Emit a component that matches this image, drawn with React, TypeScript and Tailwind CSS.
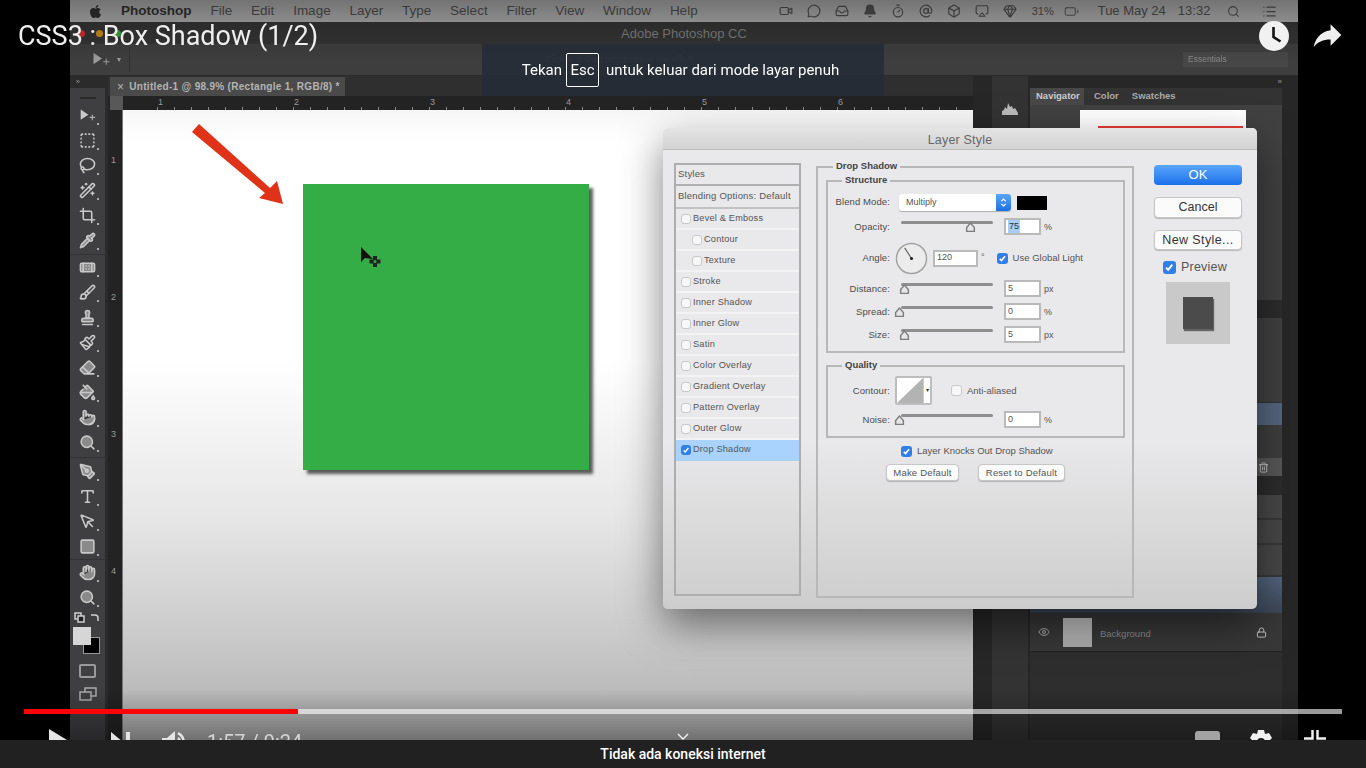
import {
  Airplay, AtSign, Battery, Bell, Brush, Crop, Eraser, Gem, Hand, Inbox, Lasso, List, Lock, MessageCircle,
  MousePointer, PaintBucket, Pipette, Search, Square, SquareDashed, Stamp, Timer, Type, Video, Wand2,
  Bandage, PenTool, Pointer, Paintbrush, Eye, Trash2, Box,
} from "lucide-react";
import { FaApple } from "react-icons/fa";
import type { ReactNode } from "react";

const menus = ["File", "Edit", "Image", "Layer", "Type", "Select", "Filter", "View", "Window", "Help"];
const statusIcons = [Video, MessageCircle, Inbox, Bell, Timer, AtSign, Box, Airplay, Gem];
const toolGroups = [
  { gap: "", tools: [MoveTool, SquareDashed, Lasso, Wand2, Crop, Pipette] },
  { gap: "border-t border-[#333] mt-px", tools: [Bandage, Brush, Stamp, Paintbrush, Eraser, PaintBucket, Pointer, Search] },
  { gap: "border-t border-[#333] mt-[2px] pt-px", tools: [PenTool, Type, MousePointer, Square] },
  { gap: "border-t border-[#333]", tools: [Hand, Search] },
];
// these read as solid shapes in the video
const solidTools = [Bandage, Stamp, Eraser, PaintBucket, Pointer, Search, PenTool, Square, Hand, Pipette];
const effects = [
  { label: "Bevel & Emboss" },
  { label: "Contour", sub: true },
  { label: "Texture", sub: true },
  { label: "Stroke" },
  { label: "Inner Shadow" },
  { label: "Inner Glow" },
  { label: "Satin" },
  { label: "Color Overlay" },
  { label: "Gradient Overlay" },
  { label: "Pattern Overlay" },
  { label: "Outer Glow" },
  { label: "Drop Shadow", checked: true },
];

function MoveTool({ className }: { className?: string }) {
  return (
    <svg viewBox="0 0 20 16" className={className} fill="currentColor">
      <path d="M2 1l9 6-9 6z" />
      <path d="M15 7h1.400v2.500H19V11h-2.600v2.500H15V11h-2.500V9.500H15z" opacity="0.8" />
    </svg>
  );
}

function Check({ on, size = "w-[11px] h-[11px]" }: { on?: boolean; size?: string }) {
  return (
    <span
      className={`${size} shrink-0 rounded-[3px] flex items-center justify-center ${
        on ? "bg-[#2f7fe6]" : "bg-[#f7f7f7] border border-[#c9c9c9]"
      }`}
    >
      {on && (
        <svg viewBox="0 0 10 10" className="w-[80%] h-[80%]" fill="none" stroke="white" strokeWidth="1.800">
          <path d="M2 5.500l2 2 4-5" />
        </svg>
      )}
    </span>
  );
}

function Field({ value, selected, width = "w-[37px]" }: { value: string; selected?: boolean; width?: string }) {
  return (
    <span className={`${width} h-[17px] bg-white border-2 border-[#bababa] flex items-center pl-[2px] text-[9px] text-[#555]`}>
      <span className={selected ? "bg-[#a8cdf7] text-[#234] px-px" : ""}>{value}</span>
    </span>
  );
}

function Label({ children, low }: { children: ReactNode; low?: boolean }) {
  return (
    <span className={`w-[62px] text-right text-[9.500px] tracking-[0.1px] text-[#4c4c4c] ${low ? "pt-[2px]" : ""}`}>{children}</span>
  );
}

// track sits above the row middle, thumb hangs off it
function Slider({ thumb }: { thumb: number }) {
  return (
    <span className="relative ml-[11px] w-[92px] h-[17px] block">
      <span className="absolute left-0 right-0 top-[3px] h-[3px] rounded-full bg-[#8e8e8e]" />
      <svg viewBox="0 0 10 10" className="absolute top-[4px] w-[11px] h-[11px]" style={{ left: thumb }}>
        <path d="M5 1l3.500 4v3.500h-7V5z" fill="#e6e6e6" stroke="#7c7c7c" strokeWidth="1.300" />
      </svg>
    </span>
  );
}

function SliderRow({ label, thumb, value, unit, top }: { label: string; thumb: number; value: string; unit: string; top: string }) {
  return (
    <div className={`flex items-center h-[17px] ${top}`}>
      <Label low>{label}</Label>
      <Slider thumb={thumb} />
      <span className="ml-[11px]">
        <Field value={value} selected={value === "75"} />
      </span>
      <span className="ml-[3px] pt-[2px] text-[9px] text-[#555]">{unit}</span>
    </div>
  );
}

function Group({ title, className, titleLeft, children }: { title: string; className: string; titleLeft: string; children?: ReactNode }) {
  return (
    <div className={`relative border-2 border-[#b8b8b8] ${className}`}>
      <span className={`absolute -top-[9px] ${titleLeft} bg-[#e9e8ea] px-[3px] text-[9.500px] leading-[14px] font-bold text-[#444]`}>
        {title}
      </span>
      {children}
    </div>
  );
}

function MacButton({ children, className }: { children: ReactNode; className: string }) {
  return (
    <button className={`bg-[#fbfbfb] border border-[#c6c6c6] rounded-[4px] flex items-center justify-center shadow-[0_1px_1px_rgba(0,0,0,0.2)] ${className}`}>
      {children}
    </button>
  );
}

function LayerStyleDialog() {
  return (
    <div className="absolute left-[593px] top-[128px] w-[594px] h-[481px] rounded-[5px] overflow-hidden flex flex-col bg-linear-to-b from-[#e9e8ea] from-65% to-[#cdcdcd] shadow-[0_16px_40px_rgba(0,0,0,0.5)] text-[#555]">
      <div className="h-[22px] shrink-0 pt-[3px] bg-linear-to-b from-[#e4e4e4] to-[#d3d3d3] border-b border-[#bdbdbd] flex items-center justify-center text-[12.500px] tracking-[0.2px] text-[#666]">
        Layer Style
      </div>
      <div className="flex-1 flex">
        {/* Styles list */}
        <div className="ml-[11px] mt-[13px] w-[127px] h-[433px] border-2 border-[#adadad] flex flex-col text-[9.500px] tracking-[0.2px]">
          <div className="h-[21px] border-b-2 border-[#b0b0b0] pl-[2px] flex items-center">Styles</div>
          <div className="h-[23px] border-b-2 border-[#c2c2c2] pl-[2px] flex items-center">Blending Options: Default</div>
          {effects.map((fx) => (
            <div
              key={fx.label}
              className={`h-[21px] shrink-0 flex items-center gap-[2px] border-b-2 text-[9.200px] ${
                fx.checked ? "bg-[#a9d3fd] border-[#a9d3fd]" : "border-[#f3f3f4]"
              } ${fx.sub ? "pl-[16px]" : "pl-[5px]"}`}
            >
              <Check on={fx.checked} size="w-[10px] h-[10px]" />
              <span>{fx.label}</span>
            </div>
          ))}
        </div>

        {/* Drop shadow settings */}
        <Group title="Drop Shadow" titleLeft="left-[15px]" className="ml-[15px] mt-[16px] w-[318px] h-[432px] pl-[8px] pt-[12px]">
          <Group title="Structure" titleLeft="left-[14px]" className="w-[299px] h-[173px]">
            <div className="flex items-center h-[17px] mt-[12px]">
              <Label>Blend Mode:</Label>
              <span className="ml-[9px] w-[112px] h-[17px] bg-white rounded-[3px] flex items-center overflow-hidden text-[9px] pl-[7px] shadow-[0_1px_1px_rgba(0,0,0,0.25)]">
                <span className="flex-1">Multiply</span>
                <span className="w-[15px] h-full bg-linear-to-b from-[#5aa6f8] to-[#1c6fe2] flex items-center justify-center">
                  <svg viewBox="0 0 8 12" className="w-[7px] h-[11px]" fill="none" stroke="white" strokeWidth="1.400">
                    <path d="M1.500 4.500L4 2l2.500 2.500M1.500 7.500L4 10l2.500-2.500" />
                  </svg>
                </span>
              </span>
              <span className="ml-[6px] w-[30px] h-[14px] bg-black" />
            </div>
            <SliderRow label="Opacity:" thumb={64} value="75" unit="%" top="mt-[7px]" />
            <div className="flex items-center h-[32px] mt-[7px]">
              <Label>Angle:</Label>
              <svg viewBox="0 0 34 34" className="ml-[5px] w-[33px] h-[33px] shrink-0">
                <circle cx="17" cy="17" r="15.500" fill="#ececec" stroke="#a3a3a3" strokeWidth="1.500" />
                <path d="M10 6l7 11" stroke="#666" strokeWidth="1.200" />
                <circle cx="17" cy="17" r="1.600" fill="#222" />
              </svg>
              <span className="ml-[5px]">
                <Field value="120" width="w-[45px]" />
              </span>
              <span className="ml-[3px] text-[9px]">°</span>
              <span className="ml-[12px]">
                <Check on />
              </span>
              <span className="ml-[5px] text-[9.500px]">Use Global Light</span>
            </div>
            <SliderRow label="Distance:" thumb={-2} value="5" unit="px" top="mt-[6px]" />
            <SliderRow label="Spread:" thumb={-7} value="0" unit="%" top="mt-[6px]" />
            <SliderRow label="Size:" thumb={-2} value="5" unit="px" top="mt-[6px]" />
          </Group>

          <Group title="Quality" titleLeft="left-[14px]" className="mt-[12px] w-[299px] h-[73px]">
            <div className="flex items-center h-[29px] mt-[9px]">
              <Label low>Contour:</Label>
              <span className="ml-[5px] w-[37px] h-[29px] bg-white border-2 border-[#bdbdbd] rounded-[2px] flex">
                <svg viewBox="0 0 28 25" className="w-[26px] h-full" preserveAspectRatio="none">
                  <path d="M0 25L28 0v25z" fill="#b3b3b3" />
                </svg>
                <span className="flex-1 flex items-center justify-center text-[6px] text-[#333] border-l border-[#ccc]">▾</span>
              </span>
              <span className="ml-[19px]">
                <Check />
              </span>
              <span className="ml-[5px] pt-[2px] text-[9.500px]">Anti-aliased</span>
            </div>
            <div className="mt-[6px]">
              <SliderRow label="Noise:" thumb={-7} value="0" unit="%" top="" />
            </div>
          </Group>

          <div className="mt-[6px] ml-[75px] flex items-center gap-[5px] text-[9.500px]">
            <Check on />
            <span>Layer Knocks Out Drop Shadow</span>
          </div>
          <div className="mt-[6px] ml-[60px] flex gap-[19px] text-[9.500px] tracking-[0.2px]">
            <MacButton className="w-[73px] h-[17px]">Make Default</MacButton>
            <MacButton className="w-[87px] h-[17px]">Reset to Default</MacButton>
          </div>
        </Group>

        {/* Buttons */}
        <div className="ml-[20px] mt-[15px] w-[88px] flex flex-col items-center">
          <button className="w-full h-[20px] rounded-[4px] bg-linear-to-b from-[#59a6fb] to-[#1b70ea] text-white text-[13px]">OK</button>
          <MacButton className="mt-[12px] w-full h-[21px] text-[12.500px] text-[#333]">Cancel</MacButton>
          <MacButton className="mt-[12px] w-full h-[20px] text-[12.500px] tracking-[0.4px] text-[#333]">New Style...</MacButton>
          <div className="mt-[8px] w-full pl-[9px] flex items-center gap-[5px] text-[12.500px] tracking-[0.2px]">
            <Check on size="w-[13px] h-[13px]" />
            <span>Preview</span>
          </div>
          <div className="mt-[5px] ml-0 w-[64px] h-[62px] bg-[#c9c9c9] flex items-center justify-center">
            <span className="w-[30px] h-[32px] bg-[#4b4b4b] shadow-[1px_2px_1px_rgba(0,0,0,0.5)]" />
          </div>
        </div>
      </div>
    </div>
  );
}

function MenuBar() {
  return (
    <div className="h-[22px] shrink-0 bg-linear-to-b from-[#9a9a9a] to-[#a8a8a8] flex items-center text-[13.500px] text-[#4a4a4a] pl-[18px]">
      <FaApple className="w-[15px] h-[15px] text-[#2e2e2e]" />
      <span className="ml-[18px] font-bold text-[#2f2f2f]">Photoshop</span>
      <div className="ml-[19px] flex gap-[18.800px]">
        {menus.map((m) => (
          <span key={m}>{m}</span>
        ))}
      </div>
      <div className="ml-[81px] flex items-center gap-[14px]">
        {statusIcons.map((Icon, i) => (
          <Icon key={i} className="w-[14px] h-[14px]" strokeWidth={2} fill={i === 3 ? "currentColor" : "none"} />
        ))}
      </div>
      <span className="ml-[15px] text-[11px]">31%</span>
      <Battery className="ml-[7px] w-[21px] h-[15px]" strokeWidth={1.500} />
      <span className="ml-[16px] text-[13px]">Tue May 24</span>
      <span className="ml-[12px] text-[13px]">13:32</span>
      <Search className="ml-[17px] w-[13px] h-[13px]" />
      <List className="ml-[22px] w-[15px] h-[15px]" />
    </div>
  );
}

function Toolbar() {
  return (
    <div className="w-[38px] shrink-0 flex flex-col bg-[#2b2b2b]">
      <div className="h-[12px] pl-[6px] text-[7px] leading-[12px] text-[#999]">»</div>
      <div className="flex-1 w-[35px] bg-[#3f3e40] flex flex-col items-center text-[#c9c9c9]">
        <span className="mt-[9px] mb-[4px] w-[16px] h-[2px] bg-[#2b2b2b]" />
        {toolGroups.map((group, g) => (
          <div key={g} className={`w-full flex flex-col items-center ${group.gap}`}>
            {group.tools.map((Icon, i) => (
              <span key={i} className="relative h-[25px] w-full flex items-center justify-center">
                <Icon
                  className="w-[17px] h-[17px]"
                  strokeWidth={2.200}
                  {...(solidTools.includes(Icon as never) ? { fill: "currentColor", fillOpacity: 0.55 } : {})}
                />
                <span className="absolute right-[6px] bottom-[3px] w-[2px] h-[2px] bg-[#aaa]" />
              </span>
            ))}
          </div>
        ))}
        {/* default colours + swap */}
        <svg viewBox="0 0 30 12" className="mt-[2px] w-[30px] h-[12px]" fill="none" stroke="#cfcfcf" strokeWidth="1.500">
          <rect x="2" y="1" width="6" height="6" />
          <rect x="5" y="4" width="6" height="6" fill="#222" />
          <path d="M18 3h4a3 3 0 0 1 3 3v3" />
        </svg>
        <div className="relative mt-[3px] w-[28px] h-[27px] self-start ml-[3px]">
          <span className="absolute left-[10px] top-[10px] w-[17px] h-[17px] bg-black border border-[#999]" />
          <span className="absolute left-0 top-0 w-[18px] h-[18px] bg-[#d6d6d6]" />
        </div>
        <span className="mt-[10px] w-[17px] h-[14px] border-2 border-[#999] rounded-[2px]" />
        <svg viewBox="0 0 18 14" className="mt-[9px] w-[18px] h-[14px]" fill="none" stroke="#aaa" strokeWidth="1.500">
          <rect x="6" y="1" width="11" height="8" />
          <rect x="1" y="5" width="11" height="8" fill="#3f3e40" />
        </svg>
      </div>
    </div>
  );
}

function DocumentArea() {
  return (
    <div className="w-[865px] shrink-0 flex flex-col bg-[#232323]">
      <div className="h-[20px] shrink-0 bg-[#2f2f2f] pl-[2px] flex items-end">
        <div className="w-[235px] h-[19px] bg-[#4a4a4a] flex items-center pl-[7px] text-[10px] font-bold tracking-[0.3px] text-[#b4b4b4] whitespace-nowrap">
          <span className="mr-[5px] font-normal text-[12px]">×</span>
          Untitled-1 @ 98.9% (Rectangle 1, RGB/8) *
        </div>
      </div>
      <div className="h-[14px] shrink-0 flex text-[9px] leading-[12px] text-[#9a9a9a]">
        <span className="ml-[2px] w-[13px] bg-[#585858]" />
        {[1, 2, 3, 4, 5, 6].map((n) => (
          <span
            key={n}
            className={`${n === 1 ? "ml-[34px]" : ""} w-[137px] pl-[1px] bg-[repeating-linear-gradient(90deg,#8a8a8a_0,#8a8a8a_1px,transparent_1px,transparent_17px)] bg-[length:137px_3px] bg-bottom bg-no-repeat`}
          >
            {n}
          </span>
        ))}
      </div>
      <div className="flex-1 flex min-h-0">
        <div className="ml-[2px] w-[13px] shrink-0 flex flex-col text-[9px] text-[#9a9a9a] border-r border-[#777] pl-[1px]">
          {[1, 2, 3, 4].map((n) => (
            <span key={n} className={`${n === 1 ? "mt-[44px]" : ""} h-[137px]`}>
              {n}
            </span>
          ))}
        </div>
        <div className="relative flex-1 bg-[linear-gradient(180deg,#f6f6f6_0,#ffffff_5%,#ffffff_40%,#e6e6e6_65%,#c8c8c8_85%,#adadad_100%)]">
          <svg viewBox="0 0 100 90" className="absolute left-[68px] top-[14px] w-[100px] h-[90px]">
            <path d="M1 8L8 0l71 64 7-7 6 23-24-6 6-5z" fill="#df3218" />
          </svg>
          <div className="absolute left-[180px] top-[74px] w-[286px] h-[286px] bg-[#35ad47] shadow-[4px_4px_3px_rgba(40,40,40,0.75)]" />
          <svg viewBox="0 0 24 24" className="absolute left-[237px] top-[136px] w-[24px] h-[24px]">
            <path d="M1 1v15l4-4 8 1z" fill="#111" />
            <path d="M13 10h4v3.500h3.500v4H17V21h-4v-3.500H9.500v-4H13z" fill="#222" />
            <circle cx="15" cy="15.500" r="1.500" fill="#35ad47" />
          </svg>
        </div>
      </div>
    </div>
  );
}

function RightPanels() {
  return (
    <div className="flex-1 flex bg-[#272727]">
      <div className="ml-[19px] w-[36px] shrink-0 bg-[#343334] flex flex-col items-center pt-[27px] text-[#bbb]">
        <svg viewBox="0 0 16 12" className="w-[16px] h-[12px]" fill="currentColor">
          <path d="M0 12V8l2-1 1-3 2 2 1-6 2 4 2-1 1 3 2-1 3 5v2z" />
        </svg>
      </div>
      <div className="ml-[2px] w-[252px] shrink-0 flex flex-col text-[9.500px] text-[#aaa]">
        <div className="h-[12px] flex justify-end text-[8px] leading-[12px] text-[#999]">»</div>
        <div className="h-[17px] shrink-0 bg-[#333] flex items-center font-bold">
          <span className="h-full w-[54px] bg-[#484848] flex items-center pl-[6px] text-[#ccc]">Navigator</span>
          <span className="ml-[10px]">Color</span>
          <span className="ml-[13px]">Swatches</span>
        </div>
        <div className="h-[195px] shrink-0 bg-[#424142] pl-[50px] pt-[5px]">
          <div className="w-[166px] h-[50px] bg-white pl-[18px] pr-[3px] pt-[16px]">
            <div className="h-[3px] bg-[#e83a36]" />
          </div>
        </div>
        <div className="h-[18px] shrink-0 bg-[#2c2c2c]" />
        <div className="h-[85px] shrink-0 bg-[#424142] border-b border-[#333]" />
        <div className="h-[22px] shrink-0 bg-[#56667f]" />
        <div className="h-[33px] shrink-0 bg-[#3f3e3f]" />
        <div className="h-[18px] shrink-0 bg-[#575757] flex items-center justify-end pr-[15px] text-[#ccc]">
          <Trash2 className="w-[11px] h-[11px] mr-[-2px]" />
        </div>
        <div className="h-[19px] shrink-0 bg-[#2c2c2c]" />
        <div className="h-[25px] shrink-0 bg-[#474747] border-b-2 border-[#383838]" />
        <div className="h-[25px] shrink-0 bg-[#474747] border-b-2 border-[#383838]" />
        <div className="h-[32px] shrink-0 bg-[#474747] border-b-2 border-[#383838]" />
        <div className="h-[36px] shrink-0 bg-linear-to-b from-[#54647f] to-[#3d4758]" />
        <div className="h-[39px] shrink-0 bg-[#383838] border-b border-[#222] flex items-center">
          <Eye className="ml-[8px] w-[12px] h-[12px]" />
          <span className="ml-[13px] w-[29px] h-[29px] bg-linear-to-b from-[#c9c9c9] to-[#a9a9a9]" />
          <span className="ml-[8px] mt-[4px] flex-1 text-[#8c8c8c]">Background</span>
          <Lock className="mr-[15px] w-[11px] h-[11px] text-[#ccc]" />
        </div>
        <div className="flex-1 bg-[#2e2e2e]" />
      </div>
    </div>
  );
}

function VideoFrame() {
  return (
    <div className="relative ml-[70px] w-[1228px] h-full flex flex-col overflow-hidden blur-[0.7px] font-['Liberation_Sans',sans-serif]">
      <MenuBar />
      <div className="relative h-[22px] shrink-0 bg-[#343434] flex items-center justify-center pt-px text-[13px] text-[#7c7c7c]">
        <div className="absolute left-[8px] flex gap-[11px]">
          <span className="w-[7px] h-[7px] rounded-full bg-[#c9302c]" />
          <span className="w-[7px] h-[7px] rounded-full bg-[#c88a1e]" />
          <span className="w-[7px] h-[7px] rounded-full bg-[#3b9e3b]" />
        </div>
        Adobe Photoshop CC
      </div>
      <div className="h-[32px] shrink-0 bg-[#3f3e3f] border-b border-[#2b2b2b] flex items-center text-[#9a9a9a]">
        <MoveTool className="ml-[21px] w-[20px] h-[15px]" />
        <span className="ml-[6px] text-[8px]">▾</span>
        <span className="ml-[8px] w-px h-[24px] bg-[#333]" />
        <span className="ml-[415px] text-[9px] text-[#777]">Click and drag to reposition the effect.</span>
        <span className="ml-auto mr-[10px] w-[105px] h-[15px] bg-[#474747] pl-[5px] text-[8.500px] leading-[15px] text-[#888]">Essentials</span>
      </div>
      <div className="flex-1 flex min-h-0">
        <Toolbar />
        <DocumentArea />
        <RightPanels />
      </div>
      <LayerStyleDialog />
    </div>
  );
}

export default function App() {
  return (
    <div className="w-[1366px] h-[768px] flex flex-col bg-black overflow-hidden font-[Roboto,sans-serif]">
      <div className="relative h-[740px] shrink-0 overflow-hidden">
        <VideoFrame />

        {/* player chrome */}
        <div className="absolute inset-x-0 top-0 h-[60px] bg-linear-to-b from-black/25 to-transparent" />
        <div className="absolute inset-x-0 bottom-0 h-[50px] bg-linear-to-b from-transparent to-black/35" />

        <div className="absolute left-[18px] top-[19px] text-[27px] leading-[34px] text-[#eeeeee] whitespace-nowrap">
          CSS3 : Box Shadow (1/2)
        </div>

        <svg viewBox="0 0 30 30" className="absolute left-[1259px] top-[21px] w-[30px] h-[30px]">
          <circle cx="15" cy="15" r="15" fill="#f1f1f1" />
          <path d="M14.500 6v10l7 4.500" fill="none" stroke="#111" strokeWidth="2.600" />
        </svg>
        <svg viewBox="0 0 24 24" className="absolute left-[1309px] top-[18px] w-[37px] h-[37px]" fill="#efefef">
          <path d="M21 11l-7-7v4C7 9 4 14 3 19c2.500-3.500 6-5.100 11-5.100V18l7-7z" />
        </svg>

        <div className="absolute left-[482px] top-[44px] w-[402px] h-[52px] pr-[5px] bg-[#252c36]/90 flex items-center justify-center text-[15px] text-white">
          Tekan
          <span className="ml-[4px] mr-[7px] w-[33px] h-[34px] border border-white rounded-[2px] flex items-center justify-center">Esc</span>
          untuk keluar dari mode layar penuh
        </div>

        <div className="absolute left-[24px] top-[709px] w-[1318px] h-[5px] flex bg-white/60">
          <span className="w-[274px] h-full bg-[#ff0000]" />
        </div>

        <div className="absolute left-0 top-[729px] w-full flex items-start text-[#e4e4e4]">
          <svg viewBox="0 0 18 22" className="ml-[49px] w-[18px] h-[22px]" fill="currentColor">
            <path d="M0 0l18 11-18 11z" />
          </svg>
          <svg viewBox="0 0 19 20" className="ml-[44px] mt-[3px] w-[19px] h-[20px]" fill="currentColor">
            <path d="M0 0l12 10L0 20zM15 0h4v20h-4z" />
          </svg>
          <svg viewBox="0 0 24 24" className="ml-[32px] mt-px w-[24px] h-[24px]" fill="currentColor">
            <path d="M0 8h5l8-7v22l-8-7H0z" />
            <path d="M16 3a10 10 0 0 1 0 18M16 8a5 5 0 0 1 0 8" fill="none" stroke="currentColor" strokeWidth="2.500" />
          </svg>
          <span className="ml-[21px] mt-px text-[20px] leading-[24px] text-[#d4d4d4]">1:57 / 9:24</span>
          <svg viewBox="0 0 12 8" className="ml-[375px] mt-[4px] w-[12px] h-[8px]" fill="none" stroke="#eee" strokeWidth="1.500">
            <path d="M1 1l5 5 5-5" />
          </svg>
          <span className="ml-[506px] mt-[2px] w-[25px] h-[20px] rounded-[3px] bg-[#a3a3a3]" />
          <svg viewBox="0 0 24 24" className="ml-[29px] mt-px w-[24px] h-[24px]" fill="#f0f0f0">
            <path d="M9 0h6l1 4 4-1 3 5-3 3v2l3 3-3 5-4-1-1 4H9l-1-4-4 1-3-5 3-3v-2L1 8l3-5 4 1zm3 8a4 4 0 1 0 0 8 4 4 0 0 0 0-8z" />
          </svg>
          <svg viewBox="0 0 22 10" className="ml-[31px] mt-px w-[22px] h-[10px]" fill="none" stroke="#eee" strokeWidth="2.500">
            <path d="M0 8.500h8.500V0M13.500 0v8.500H22" />
          </svg>
        </div>
      </div>

      <div className="flex-1 bg-[#212121] flex items-center justify-center text-[14px] font-medium text-white">
        Tidak ada koneksi internet
      </div>
    </div>
  );
}
